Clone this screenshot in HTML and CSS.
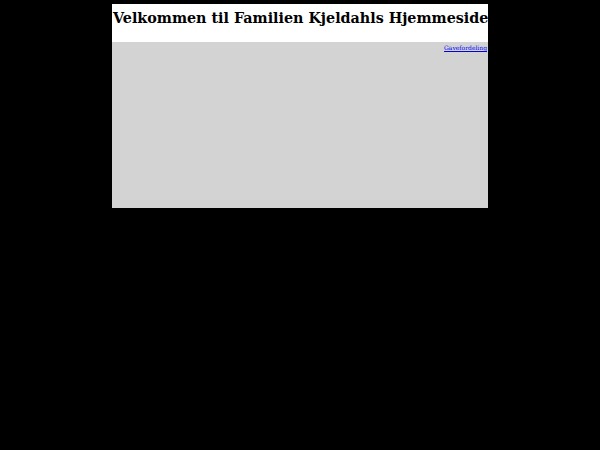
FILE: index.html
```html
<!DOCTYPE html>
<html>
<head>
<meta charset="utf-8">
<link rel="stylesheet" href="styles.css">
</head>
<body>
<div class="page">
  <div class="header"><h1 class="title">Velkommen til Familien Kjeldahls Hjemmeside</h1></div>
  <div class="content">
    <div class="links"><a class="link" href="#">Gavefordeling</a></div>
  </div>
</div>
</body>
</html>
```
FILE: styles.css
```css
html, body { margin: 0; padding: 0; background: #000; }
body { font-family: "DejaVu Serif", serif; }
.page {
  width: 376px;
  margin: 4px auto 0;
  display: flex;
  flex-direction: column;
}
.header {
  background: #fff;
  height: 38px;
  overflow: hidden;
}
.title {
  margin: 5px 0 0 1px;
  font-size: 14.3px;
  font-weight: bold;
  line-height: 18px;
  color: #000;
  white-space: nowrap;
}
.content {
  background: #d3d3d3;
  height: 166px;
}
.links {
  text-align: right;
  padding: 2px 1px 0 0;
  font-size: 6px;
  line-height: 8px;
}
.link { color: #00e; }
```
